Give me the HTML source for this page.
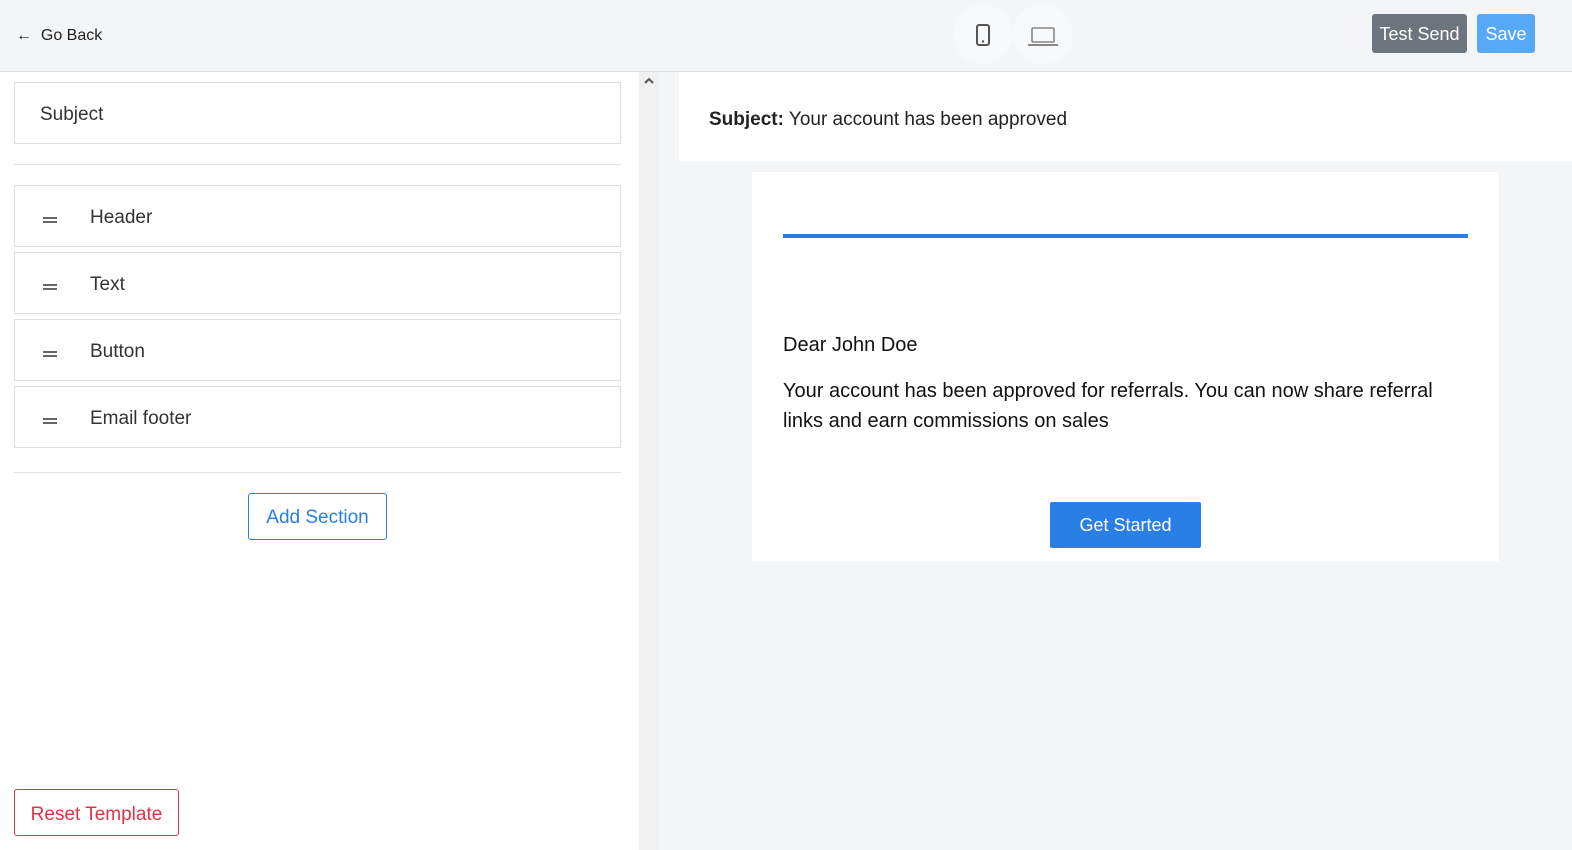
<!DOCTYPE html>
<html><head><style>
*{box-sizing:border-box;margin:0;padding:0}
body{width:1572px;height:850px;overflow:hidden;background:#f4f5f7;font-family:"Liberation Sans",sans-serif;position:relative}
.top{position:absolute;left:0;top:0;width:1572px;height:72px;background:#f4f5f7;border-bottom:1px solid #dcdcdc}
.back{position:absolute;left:16px;top:27px;font-size:16px;color:#222}
.ic{position:absolute;top:4px;width:60px;height:60px;border-radius:50%;background:#f7f8f9}
.btn{position:absolute;top:14px;height:39px;border-radius:3px;color:#fff;font-size:18px;line-height:41px;text-align:center}
.left{position:absolute;left:0;top:72px;width:639px;height:778px;background:#fff}
.sb{position:absolute;left:639px;top:72px;width:20px;height:778px;background:#f0f0f0}
.box{position:absolute;left:14px;width:607px;height:62px;border:1px solid #dedede;font-size:19px;color:#333;line-height:64px}
.hr{position:absolute;left:14px;width:607px;height:1px;background:#e2e2e2}
.eq{position:absolute;left:28px;top:31px;width:14px;height:6px;border-top:2px solid #666;border-bottom:2px solid #666}
</style></head><body>
<div class="top">
<div class="back">&#8592;&nbsp; Go Back</div>
<div class="ic" style="left:953px"><svg style="position:absolute;left:23px;top:20px" width="14" height="22" viewBox="0 0 14 22"><rect x="1" y="1" width="12" height="20" rx="2" fill="none" stroke="#555" stroke-width="2"/><circle cx="7" cy="17.5" r="1.2" fill="#555"/></svg></div>
<div class="ic" style="left:1013px"><svg style="position:absolute;left:15px;top:23px" width="30" height="20" viewBox="0 0 30 20"><rect x="4" y="1" width="22" height="14" rx="1" fill="none" stroke="#888" stroke-width="1.6"/><rect x="0" y="17" width="30" height="2" fill="#888"/></svg></div>
<div class="btn" style="left:1372px;width:95px;background:#6c757d">Test Send</div>
<div class="btn" style="left:1477px;width:58px;background:#58a8f8">Save</div>
</div>
<div class="left">
<div class="box" style="top:10px;padding-left:25px">Subject</div>
<div class="hr" style="top:92px"></div>
<div class="box" style="top:113px;padding-left:75px"><span class="eq"></span>Header</div>
<div class="box" style="top:180px;padding-left:75px"><span class="eq"></span>Text</div>
<div class="box" style="top:247px;padding-left:75px"><span class="eq"></span>Button</div>
<div class="box" style="top:314px;padding-left:75px"><span class="eq"></span>Email footer</div>
<div class="hr" style="top:400px"></div>
<div style="position:absolute;left:248px;top:421px;width:139px;height:47px;border:1px solid #2a7fe6;border-radius:3px;color:#2a7fe6;font-size:19px;line-height:48px;text-align:center">Add Section</div>
<div style="position:absolute;left:14px;top:717px;width:165px;height:47px;border:1px solid #dc3545;border-radius:3px;color:#dc3545;font-size:19px;line-height:50px;text-align:center">Reset Template</div>
</div>
<div class="sb"><svg style="position:absolute;left:4px;top:4px" width="12" height="10" viewBox="0 0 12 10"><path d="M2 7L6 3L10 7" fill="none" stroke="#555" stroke-width="2"/></svg></div>
<div style="position:absolute;left:679px;top:72px;width:893px;height:89px;background:#fff;font-size:19px;color:#222;padding:37px 0 0 30px"><b>Subject:</b> Your account has been approved</div>
<div style="position:absolute;left:752px;top:172px;width:747px;height:389px;background:#fff">
<div style="position:absolute;left:31px;top:62px;width:685px;height:4px;background:#2a7fe6"></div>
<div style="position:absolute;left:31px;top:162px;font-size:20px;color:#111">Dear John Doe</div>
<div style="position:absolute;left:31px;top:204px;width:680px;font-size:20px;line-height:30px;color:#111">Your account has been approved for referrals. You can now share referral links and earn commissions on sales</div>
<div style="position:absolute;left:298px;top:330px;width:151px;height:46px;background:#2a7fe6;border-radius:2px;color:#fff;font-size:18px;line-height:46px;text-align:center">Get Started</div>
</div>
</body></html>
